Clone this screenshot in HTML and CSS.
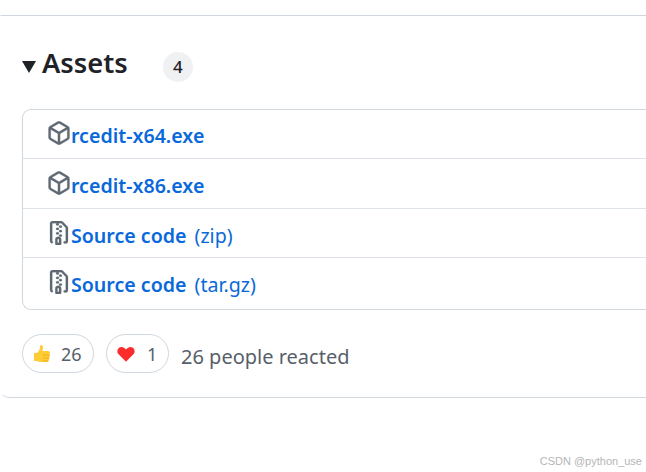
FILE: index.html
```html
<!DOCTYPE html>
<html lang="en">
<head>
<meta charset="utf-8">
<title>Assets</title>
<link rel="stylesheet" href="styles.css">
</head>
<body>
<section class="card">
  <div class="summary">
    <svg class="caret" viewBox="0 0 14 12"><path d="M0 0h14L7 12z"/></svg>
    <h2 class="title">Assets</h2>
    <span class="counter">4</span>
  </div>
  <ul class="assets">
    <li class="row">
      <svg class="icon" viewBox="0 0 16 16"><path d="m8.878.392 5.25 3.045c.54.314.872.89.872 1.514v6.098a1.75 1.75 0 0 1-.872 1.514l-5.25 3.045a1.75 1.75 0 0 1-1.756 0l-5.25-3.045A1.75 1.75 0 0 1 1 11.049V4.951c0-.624.332-1.201.872-1.514L7.122.392a1.75 1.75 0 0 1 1.756 0ZM7.875 1.69l-4.63 2.685L8 7.133l4.755-2.758-4.63-2.685a.248.248 0 0 0-.25 0ZM2.5 5.677v5.372c0 .09.047.171.125.216l4.625 2.683V8.432Zm6.25 8.271 4.625-2.683a.25.25 0 0 0 .125-.216V5.677L8.75 8.432Z"/></svg>
      <a class="link" href="#">rcedit-x64.exe</a>
    </li>
    <li class="row">
      <svg class="icon" viewBox="0 0 16 16"><path d="m8.878.392 5.25 3.045c.54.314.872.89.872 1.514v6.098a1.75 1.75 0 0 1-.872 1.514l-5.25 3.045a1.75 1.75 0 0 1-1.756 0l-5.25-3.045A1.75 1.75 0 0 1 1 11.049V4.951c0-.624.332-1.201.872-1.514L7.122.392a1.75 1.75 0 0 1 1.756 0ZM7.875 1.69l-4.63 2.685L8 7.133l4.755-2.758-4.63-2.685a.248.248 0 0 0-.25 0ZM2.5 5.677v5.372c0 .09.047.171.125.216l4.625 2.683V8.432Zm6.25 8.271 4.625-2.683a.25.25 0 0 0 .125-.216V5.677L8.75 8.432Z"/></svg>
      <a class="link" href="#">rcedit-x86.exe</a>
    </li>
    <li class="row">
      <svg class="icon" viewBox="0 0 16 16"><path d="M3.5 1.75v11.5c0 .09.048.173.126.217a.75.75 0 0 1-.752 1.298A1.748 1.748 0 0 1 2 13.25V1.75C2 .784 2.784 0 3.75 0h5.586c.464 0 .909.185 1.237.513l2.914 2.914c.329.328.513.773.513 1.237v8.586A1.75 1.75 0 0 1 12.25 15h-.5a.75.75 0 0 1 0-1.5h.5a.25.25 0 0 0 .25-.25V4.664a.25.25 0 0 0-.073-.177L9.513 1.573a.25.25 0 0 0-.177-.073H7.25a.75.75 0 0 1 0 1.5h-.5a.75.75 0 0 1 0-1.5h-3a.25.25 0 0 0-.25.25Zm3.75 8.75h.5c.966 0 1.75.784 1.75 1.75v3a.75.75 0 0 1-.75.75h-2.5a.75.75 0 0 1-.75-.75v-3c0-.966.784-1.75 1.75-1.75ZM6 5.25a.75.75 0 0 1 .75-.75h.5a.75.75 0 0 1 0 1.5h-.5A.75.75 0 0 1 6 5.25Zm.75 2.25h.5a.75.75 0 0 1 0 1.5h-.5a.75.75 0 0 1 0-1.5ZM8 6.75A.75.75 0 0 1 8.75 6h.5a.75.75 0 0 1 0 1.5h-.5A.75.75 0 0 1 8 6.75ZM8.75 3h.5a.75.75 0 0 1 0 1.5h-.5a.75.75 0 0 1 0-1.5ZM8 9.75A.75.75 0 0 1 8.75 9h.5a.75.75 0 0 1 0 1.5h-.5A.75.75 0 0 1 8 9.75Zm-1 2.5v2.25h1v-2.25a.25.25 0 0 0-.25-.25h-.5a.25.25 0 0 0-.25.25Z"/></svg>
      <a class="link" href="#">Source code</a><span class="suffix">(zip)</span>
    </li>
    <li class="row">
      <svg class="icon" viewBox="0 0 16 16"><path d="M3.5 1.75v11.5c0 .09.048.173.126.217a.75.75 0 0 1-.752 1.298A1.748 1.748 0 0 1 2 13.25V1.75C2 .784 2.784 0 3.75 0h5.586c.464 0 .909.185 1.237.513l2.914 2.914c.329.328.513.773.513 1.237v8.586A1.75 1.75 0 0 1 12.25 15h-.5a.75.75 0 0 1 0-1.5h.5a.25.25 0 0 0 .25-.25V4.664a.25.25 0 0 0-.073-.177L9.513 1.573a.25.25 0 0 0-.177-.073H7.25a.75.75 0 0 1 0 1.5h-.5a.75.75 0 0 1 0-1.5h-3a.25.25 0 0 0-.25.25Zm3.75 8.75h.5c.966 0 1.75.784 1.75 1.75v3a.75.75 0 0 1-.75.75h-2.5a.75.75 0 0 1-.75-.75v-3c0-.966.784-1.75 1.75-1.75ZM6 5.25a.75.75 0 0 1 .75-.75h.5a.75.75 0 0 1 0 1.5h-.5A.75.75 0 0 1 6 5.25Zm.75 2.25h.5a.75.75 0 0 1 0 1.5h-.5a.75.75 0 0 1 0-1.5ZM8 6.75A.75.75 0 0 1 8.75 6h.5a.75.75 0 0 1 0 1.5h-.5A.75.75 0 0 1 8 6.75ZM8.75 3h.5a.75.75 0 0 1 0 1.5h-.5a.75.75 0 0 1 0-1.5ZM8 9.75A.75.75 0 0 1 8.75 9h.5a.75.75 0 0 1 0 1.5h-.5A.75.75 0 0 1 8 9.75Zm-1 2.5v2.25h1v-2.25a.25.25 0 0 0-.25-.25h-.5a.25.25 0 0 0-.25.25Z"/></svg>
      <a class="link" href="#">Source code</a><span class="suffix">(tar.gz)</span>
    </li>
  </ul>
  <div class="reactions">
    <span class="pill pill-thumb">
      <svg class="emoji emoji-thumb" viewBox="0 0 18 20"><path fill="#ffcc33" d="M8 1c1.400 0 2 1 2 2.300 0 1.500-.6 2.700-.6 3.700H15c1.300 0 2 .8 2 1.800 0 .6-.3 1.100-.7 1.400.4.300.7.800.7 1.400 0 .7-.4 1.200-.9 1.500.3.300.5.700.5 1.200 0 .7-.5 1.200-1 1.500.1.200.2.500.2.700 0 1-.8 1.500-2 1.500H7c-1.500 0-2.500-.6-3.500-.9H1V9h3c1.500-1 3-3.500 3-6 0-1 .2-2 1-2z"/><path fill="none" stroke="#e8a820" stroke-width=".8" d="M10 11h6.500M10 14h6M10 17h5"/></svg>
      <span class="pill-count">26</span>
    </span>
    <span class="pill pill-heart">
      <svg class="emoji" viewBox="0 0 20 18"><path fill="#fb2c2c" d="M10 17.500 1.800 9.300C-.3 7.200.1 3.600 2.300 2 4.600.4 7.800 1 10 4c2.200-3 5.400-3.600 7.700-2 2.200 1.600 2.600 5.200.5 7.300z"/></svg>
      <span class="pill-count">1</span>
    </span>
    <span class="reacted">26 people reacted</span>
  </div>
</section>
<footer class="watermark">CSDN @python_use</footer>
</body>
</html>
```
FILE: styles.css
```css
html, body {
  margin: 0;
  padding: 0;
  height: 100%;
  background: #fff;
}
body {
  width: 646px;
  height: 472px;
  font-family: "Noto Sans", "Open Sans", sans-serif;
  color: #1f2328;
  position: relative;
  overflow: hidden;
}
.card {
  box-sizing: border-box;
  margin: 15px 0 0;
  width: 646px;
  height: 383px;
  padding: 0 0 0 21px;
  border: 1px solid #d0d7de;
  border-left-color: transparent;
  border-right: 0;
  border-radius: 0 0 0 9px;
}
.summary {
  display: flex;
  align-items: center;
  height: 93px;
}
.caret {
  width: 14px;
  height: 12px;
  margin-top: 8px;
  fill: #1f2328;
}
.title {
  margin: 0 0 0 6px;
  font-size: 27.3px;
  font-weight: 600;
  line-height: 32px;
}
.counter {
  margin: 9px 0 0 35px;
  width: 30px;
  height: 30px;
  border-radius: 50%;
  background: #eff1f3;
  font-size: 17px;
  font-weight: 500;
  line-height: 30px;
  text-align: center;
}
.assets {
  list-style: none;
  margin: 0;
  padding: 0;
  height: 201px;
  box-sizing: border-box;
  border: 1px solid #d0d7de;
  border-right: 0;
  border-radius: 9px 0 0 9px;
  display: flex;
  flex-direction: column;
}
.row {
  box-sizing: border-box;
  height: 50px;
  display: flex;
  align-items: center;
  padding: 4px 0 0 24px;
  border-top: 1px solid #dde3e8;
  font-size: 19.6px;
}
.row:first-child { height: 48px; padding-top: 3px; border-top: 0; }
.row:nth-child(3) { height: 49px; }
.row:last-child { height: 52px; padding-top: 3px; padding-bottom: 2px; }
.icon {
  width: 24px;
  height: 24px;
  flex: none;
  fill: #5f6974;
  stroke: #5f6974;
  stroke-width: 0.15;
  margin: -5px 0 0 0;
}
.link {
  color: #0969da;
  font-weight: 600;
  text-decoration: none;
}
.suffix {
  margin-left: 8px;
  color: #0969da;
}
.reactions {
  display: flex;
  align-items: center;
  margin-top: 24px;
}
.pill {
  box-sizing: border-box;
  height: 39px;
  display: flex;
  align-items: center;
  border: 1px solid #d0d7de;
  border-radius: 20px;
  color: #57606a;
  font-size: 18px;
}
.pill-thumb { width: 72px; padding-left: 10px; }
.pill-heart { width: 63px; margin-left: 12px; padding-left: 10px; }
.emoji { width: 18px; height: 18px; flex: none; }
.emoji-thumb { height: 20px; }
.pill-count { margin-top: 1px; }
.pill-thumb .pill-count { margin-left: 10px; }
.pill-heart .pill-count { margin-left: 12px; }
.reacted {
  margin: 6px 0 0 12px;
  color: #57606a;
  font-size: 20px;
}
.watermark {
  position: absolute;
  right: 4px;
  bottom: 5px;
  font-family: "Liberation Sans", sans-serif;
  font-size: 11px;
  color: #b5b5b5;
}
```
